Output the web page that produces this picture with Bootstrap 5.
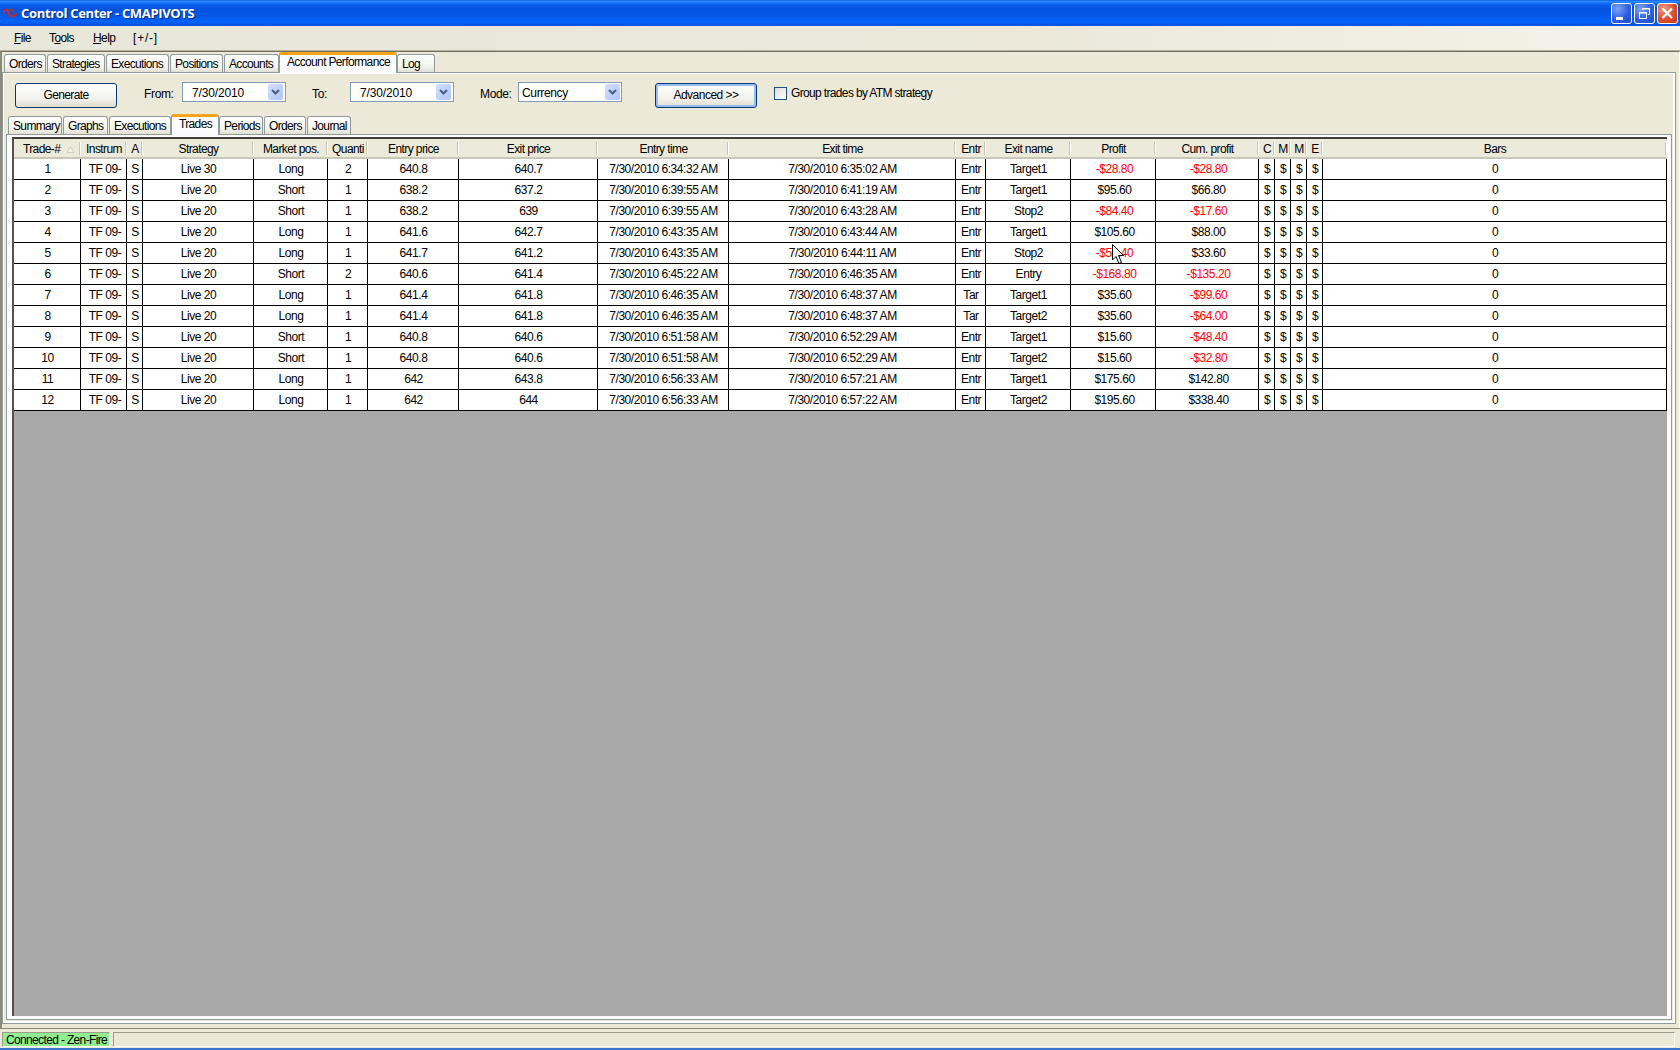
<!DOCTYPE html>
<html lang="en">
<head>
<meta charset="utf-8">
<title>Control Center - CMAPIVOTS</title>
<link href="https://cdn.jsdelivr.net/npm/bootstrap@5.3.0/dist/css/bootstrap.min.css" rel="stylesheet">
<style>
html,body{height:100%;margin:0}
body{font-family:"Liberation Sans",Arial,sans-serif;font-size:12px;line-height:14px;color:#000;background:#ece9d8;letter-spacing:-.35px;overflow:hidden}
.win{width:1680px;height:1050px}
.titlebar{height:26px;background:linear-gradient(#0a5ae0 0,#2e8cff 5%,#0a63ee 16%,#0453de 35%,#0458e8 60%,#0363fb 85%,#0350d8 100%);padding:0 2px 0 3px}
.titlebar .cap{font:bold 13px/26px "Open Sans",sans-serif;color:#fff;text-shadow:1px 1px 1px #0a2a80;letter-spacing:-.33px;margin-left:3px;white-space:nowrap}
.wbtns{gap:2px}
.wbtn{width:21px;height:21px;border:1px solid #fff;border-radius:3px;background:radial-gradient(circle at 30% 25%,#7da4f2,#2f5fe0 55%,#1e4bd0)}
.wbtn.wclose{background:radial-gradient(circle at 30% 25%,#ef9a80,#dc5030 55%,#c53a12)}
.menus{height:25px;background:linear-gradient(90deg,#e7e7da,#ebe8da 60%,#f4f3ea);padding:5px 0 0 14px;letter-spacing:-.6px;border-bottom:1px solid #b5b2a2}
.menus span:nth-child(1){width:35px}
.menus span:nth-child(2){width:44px}
.menus span:nth-child(3){width:40px}
.menus span:nth-child(4){letter-spacing:.8px}
.workspace{height:977px;border-left:2px solid #8c8a7c;border-top:1px solid #716f64;border-right:1px solid #fff;padding:0 3px 0 0}
.tabrow{height:20px;padding-left:2px;letter-spacing:-.65px}
.tabrow.inner{height:18px}
.xtab{height:18px;background:linear-gradient(#fff,#f3f3ee 70%,#e2dfd2);border:1px solid #919b9c;border-bottom:0;border-radius:3px 3px 0 0;padding:2px 0 0 4px;white-space:nowrap;margin-right:1px}
.xtab.on{height:21px;background:linear-gradient(#fff,#fcfcfe);border-top:3px solid #ffb01f;border-color:#f8a51b #919b9c #919b9c;padding:0 0 0 7px;margin:0 0 -1px -1px;position:relative;z-index:2}
.outerpane{height:952px;border:1px solid #919b9c;box-shadow:inset 1px 1px #fff,inset -2px -2px #fff;padding:0 3px 3px 3px}
.controls{height:43px;padding:9px 0 0 9px}
.xpbtn{width:102px;height:25px;border:1px solid #003c74;border-radius:3px;background:linear-gradient(#fff,#f3f3ee 60%,#e0dcd0);text-align:center;padding-top:4px;margin-top:1px;letter-spacing:-.65px}
.xpbtn.dflt{margin-left:33px;letter-spacing:-.5px;box-shadow:inset 0 0 0 2px #9ebbf0,inset 0 -2px #6a86e0}
.lbl{width:64px;padding:5px 0 0 26px}
.lbl.from{width:65px;padding-left:27px}
.field{width:104px;height:20px;border:1px solid #7f9db9;background:#fff;padding:0 2px 0 9px;letter-spacing:-.15px}
.field>span:first-child{padding-top:1px}
.field.combo{padding:0 1px 0 3px;letter-spacing:-.35px}
.drop{width:15px;height:16px;border-radius:2px;background:linear-gradient(135deg,#d2deff,#b0c6f8)}
.chk{width:13px;height:13px;border:1px solid #1c5180;background:linear-gradient(135deg,#dcdcd7,#fff);margin:5px 4px 0 17px}
.grp{padding-top:4px;letter-spacing:-.65px}
.innerpane{flex:1;border:1px solid #919b9c;background:#fcfcfe;padding:2px 4px 3px 5px;min-height:0}
.gridbox{height:100%;background:#a9a9a9;border-top:2px solid #403f3b;border-left:2px solid #55534b}
.blotter{table-layout:fixed;width:1653px;border-collapse:separate;border-spacing:0}
.blotter th,.blotter td{padding:0;text-align:center;white-space:nowrap;overflow:hidden;font-weight:400}
.blotter th{height:20px;background:#ebeadb;border-bottom:2px solid #cbc7b8;position:relative;line-height:16px;padding-top:2px;letter-spacing:-.6px}
.blotter th:first-child{padding-left:3px}
.blotter th svg{margin-left:3px}
.blotter th::after{content:"";position:absolute;right:0;top:3px;height:13px;width:2px;background:linear-gradient(90deg,#c7c5b2 50%,#fff 50%)}
.blotter td{height:21px;background:#fff;border-right:1px solid #000;border-bottom:1px solid #000;line-height:20px;letter-spacing:-.45px;padding-left:1px}
.blotter td:nth-child(2){padding-left:3px}
.blotter td:nth-child(13),.blotter td:nth-child(14){padding-left:3px}
.blotter td.neg{color:#f00}
.statusbar{height:19px;padding:3px 5px 0 2px}
.cell{height:15px;border:1px solid #9d9a8a;border-right-color:#fff;border-bottom-color:#fff;line-height:15px}
.conn{background:#90ee90;width:108px;padding-left:3px;margin-right:3px;white-space:nowrap;letter-spacing:-.65px}
.ruleline{height:1px;background:#8c8a7c}
.edge{height:2px;background:#3a76d0}
.pointer{position:absolute;left:1111px;top:243px}
</style>
</head>
<body>
<div class="win d-flex flex-column position-relative">
<header class="titlebar d-flex align-items-center">
<svg width="15" height="14" viewBox="0 0 15 14"><path d="M.8 7C1.500 2.500 4.500 2.500 5.500 6.500S8.500 11.500 10 9.500" fill="none" stroke="#b8303c" stroke-width="2.2"/><path d="M6.500 4.500C8.500 1.500 10 4 10.800 7S13 11 14 6.500" fill="none" stroke="#7a3c60" stroke-width="1.8"/></svg>
<span class="cap">Control Center - CMAPIVOTS</span>
<div class="wbtns ms-auto d-flex">
<div class="wbtn"><svg class="d-block" width="19" height="19"><rect x="4" y="13" width="7" height="3" fill="#fff"/></svg></div>
<div class="wbtn"><svg class="d-block" width="19" height="19" fill="none" stroke="#fff"><path d="M7.500 6V4.500H14.500V10.500H13M7 5H15"/><path d="M4.500 8.500H11.500V14.500H4.500ZM4 9H12"/></svg></div>
<div class="wbtn wclose"><svg class="d-block" width="19" height="19"><path d="M4.500 4.500L14 14M14 4.500L4.500 14" stroke="#fff" stroke-width="2.2"/></svg></div>
</div>
</header>
<nav class="menus d-flex"><span><u>F</u>ile</span><span>T<u>o</u>ols</span><span><u>H</u>elp</span><span>[+/-]</span></nav>
<main class="workspace">
<div class="tabrow d-flex align-items-end" id="mainTabs"></div>
<section class="outerpane d-flex flex-column">
<div class="controls d-flex align-items-start">
<div class="xpbtn">Generate</div>
<span class="lbl from">From:</span>
<div class="field d-flex align-items-center"><span>7/30/2010</span><span class="drop ms-auto"><svg class="d-block" width="15" height="16"><path d="M4 6L7.500 9.500L11 6" fill="none" stroke="#4d6185" stroke-width="2.2"/></svg></span></div>
<span class="lbl">To:</span>
<div class="field d-flex align-items-center"><span>7/30/2010</span><span class="drop ms-auto"><svg class="d-block" width="15" height="16"><path d="M4 6L7.500 9.500L11 6" fill="none" stroke="#4d6185" stroke-width="2.2"/></svg></span></div>
<span class="lbl">Mode:</span>
<div class="field combo d-flex align-items-center"><span>Currency</span><span class="drop ms-auto"><svg class="d-block" width="15" height="16"><path d="M4 6L7.500 9.500L11 6" fill="none" stroke="#4d6185" stroke-width="2.2"/></svg></span></div>
<div class="xpbtn dflt">Advanced &gt;&gt;</div>
<span class="chk"></span><span class="grp">Group trades by ATM strategy</span>
</div>
<div class="tabrow inner d-flex align-items-end" id="subTabs"></div>
<div class="innerpane"><div class="gridbox"><table class="blotter"><colgroup id="cols"></colgroup><thead><tr id="head"></tr></thead><tbody id="body"></tbody></table></div></div>
</section>
</main>
<div class="ruleline"></div>
<footer class="statusbar d-flex"><div class="cell conn">Connected - Zen-Fire</div><div class="cell flex-fill"></div></footer>
<div class="edge"></div>
<svg class="pointer" width="14" height="23"><path d="M1.500 1.500V17L5 13.500L8 20.500L10.500 19.500L7.500 12.500H12.500Z" fill="#fff" stroke="#000"/></svg>
</div>
<script src="https://cdn.jsdelivr.net/npm/bootstrap@5.3.0/dist/js/bootstrap.bundle.min.js"></script>
<script>
function tabs(id,list,on){document.getElementById(id).innerHTML=list.map(function(t){return '<div class="xtab'+(t[0]===on?' on':'')+'" style="width:'+t[1]+'px">'+t[0]+'</div>'}).join('')}
tabs('mainTabs',[['Orders',42],['Strategies',58],['Executions',63],['Positions',53],['Accounts',55],['Account Performance',118],['Log',38]],'Account Performance');
tabs('subTabs',[['Summary',54],['Graphs',45],['Executions',62],['Trades',48],['Periods',44],['Orders',42],['Journal',44]],'Trades');
var widths=[67,46,16,111,74,40,91,139,131,227,30,85,85,103,16,16,16,16,344];
document.getElementById('cols').innerHTML=widths.map(function(w){return '<col style="width:'+w+'px">'}).join('');
document.getElementById('head').innerHTML=['Trade-# <svg width="9" height="8"><path d="M1 6.500L4.500 .5L8 6.500Z" fill="#f4f2e8" stroke="#cfccbc"/></svg>','Instrum','A','Strategy','Market pos.','Quanti','Entry price','Exit price','Entry time','Exit time','Entr','Exit name','Profit','Cum. profit','C','M','M','E','Bars'].map(function(h){return '<th>'+h+'</th>'}).join('');
var d='7/30/2010 ';
var rows=[
['Live 30','Long',2,'640.8','640.7','6:34:32','6:35:02','Entr','Target1','-$28.80','-$28.80'],
['Live 20','Short',1,'638.2','637.2','6:39:55','6:41:19','Entr','Target1','$95.60','$66.80'],
['Live 20','Short',1,'638.2','639','6:39:55','6:43:28','Entr','Stop2','-$84.40','-$17.60'],
['Live 20','Long',1,'641.6','642.7','6:43:35','6:43:44','Entr','Target1','$105.60','$88.00'],
['Live 20','Long',1,'641.7','641.2','6:43:35','6:44:11','Entr','Stop2','-$54.40','$33.60'],
['Live 20','Short',2,'640.6','641.4','6:45:22','6:46:35','Entr','Entry','-$168.80','-$135.20'],
['Live 20','Long',1,'641.4','641.8','6:46:35','6:48:37','Tar','Target1','$35.60','-$99.60'],
['Live 20','Long',1,'641.4','641.8','6:46:35','6:48:37','Tar','Target2','$35.60','-$64.00'],
['Live 20','Short',1,'640.8','640.6','6:51:58','6:52:29','Entr','Target1','$15.60','-$48.40'],
['Live 20','Short',1,'640.8','640.6','6:51:58','6:52:29','Entr','Target2','$15.60','-$32.80'],
['Live 20','Long',1,'642','643.8','6:56:33','6:57:21','Entr','Target1','$175.60','$142.80'],
['Live 20','Long',1,'642','644','6:56:33','6:57:22','Entr','Target2','$195.60','$338.40']];
document.getElementById('body').innerHTML=rows.map(function(r,i){
var c=[i+1,'TF 09-','S'].concat(r.slice(0,5),[d+r[5]+' AM',d+r[6]+' AM'],r.slice(7),['$','$','$','$','0']);
return '<tr>'+c.map(function(v){return '<td'+(/^-\$/.test(v)?' class="neg"':'')+'>'+v+'</td>'}).join('')+'</tr>'}).join('');
</script>
</body>
</html>
